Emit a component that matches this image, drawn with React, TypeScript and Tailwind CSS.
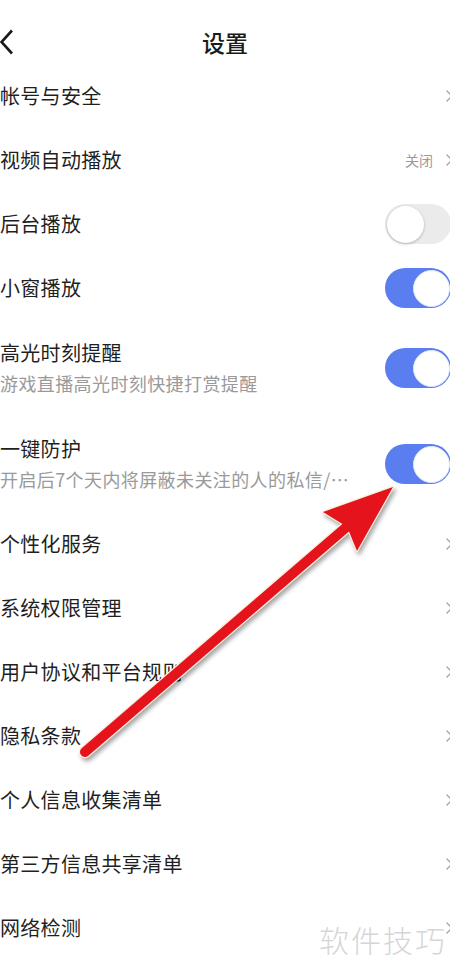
import { FC } from "react";

type Item = {
  title: string;
  desc?: string;
  value?: string;
  toggle?: boolean;
};

const items: Item[] = [
  { title: "帐号与安全" },
  { title: "视频自动播放", value: "关闭" },
  { title: "后台播放", toggle: false },
  { title: "小窗播放", toggle: true },
  { title: "高光时刻提醒", desc: "游戏直播高光时刻快捷打赏提醒", toggle: true },
  { title: "一键防护", desc: "开启后7个天内将屏蔽未关注的人的私信/…", toggle: true },
  { title: "个性化服务" },
  { title: "系统权限管理" },
  { title: "用户协议和平台规则" },
  { title: "隐私条款" },
  { title: "个人信息收集清单" },
  { title: "第三方信息共享清单" },
  { title: "网络检测" },
];

const Chevron = () => (
  <svg width="10" height="14" viewBox="0 0 10 14" className="-mr-[5px] shrink-0">
    <polyline points="1.5,1.5 7,7 1.5,12.5" fill="none" stroke="#a8a8a8" strokeWidth="1.4" />
  </svg>
);

const Switch: FC<{ on: boolean }> = ({ on }) => (
  <div
    className={
      on
        ? "w-[66px] h-[40px] -mr-[1px] rounded-full bg-[#5a7df0] flex items-center justify-end pr-[1.5px] shrink-0"
        : "w-[66px] h-[40px] -mr-[1px] rounded-full bg-[#ebebeb] flex items-center justify-start pl-[1.5px] shrink-0"
    }
  >
    <div
      className={
        on
          ? "w-[37px] h-[37px] rounded-full bg-white border border-[#dfe6fb]"
          : "w-[37px] h-[37px] rounded-full bg-white shadow-[0_1px_3px_rgba(0,0,0,0.25)]"
      }
    />
  </div>
);

const Row: FC<{ item: Item }> = ({ item }) => (
  <div className={item.desc ? "h-[96px] flex items-center" : "h-[64px] flex items-center"}>
    <div className="flex-1 min-w-0 flex flex-col justify-center">
      <div className="text-[20px] leading-[24px] tracking-[0.3px] text-[#1f1f1f] whitespace-nowrap">{item.title}</div>
      {item.desc && (
        <div className="mt-[6px] text-[18px] leading-[24px] tracking-[0.4px] text-[#9a9a9a] whitespace-nowrap">
          {item.desc}
        </div>
      )}
    </div>
    {item.value && <span className="text-[14px] text-[#9a9a9a] mr-[12px]">{item.value}</span>}
    {item.toggle === undefined ? <Chevron /> : <Switch on={item.toggle} />}
  </div>
);

// red pointer drawn over the list
const Pointer = () => (
  <svg
    width="450"
    height="975"
    viewBox="0 0 450 975"
    className="absolute left-0 top-0 pointer-events-none drop-shadow-[2px_3px_2px_rgba(0,0,0,0.35)]"
  >
    <path
      d="M81.7 748.2 L342.4 523.9 L323 512 L393 487 L357 551 L349 531.5 L88.3 755.8 A5 5 0 0 1 81.7 748.2 Z"
      fill="#e5141c"
      stroke="#fbeedd"
      strokeWidth="2.5"
      strokeLinejoin="round"
      paintOrder="stroke"
    />
  </svg>
);

export default function App() {
  return (
    <div
      className="relative w-[450px] h-[975px] overflow-hidden bg-white"
      style={{ fontFamily: '"Noto Sans CJK SC", "Noto Sans", sans-serif' }}
    >
      <div className="h-[64px] pt-[20px] flex items-center relative">
        <svg width="14" height="26" viewBox="0 0 14 26" className="absolute left-0 top-[29px]">
          <polyline points="12,1.5 1.5,13 12,24.5" fill="none" stroke="#1a1a1a" strokeWidth="2.6" />
        </svg>
        <div className="flex-1 text-center text-[23px] font-medium text-[#1a1a1a]">设置</div>
      </div>
      <div className="flex flex-col">
        {items.map((it) => (
          <Row key={it.title} item={it} />
        ))}
      </div>
      <div className="absolute left-[319px] top-[919px] text-[30px] leading-[40px] font-light text-[#d6d6d6] tracking-[2px]">
        软件技巧
      </div>
      <Pointer />
    </div>
  );
}
